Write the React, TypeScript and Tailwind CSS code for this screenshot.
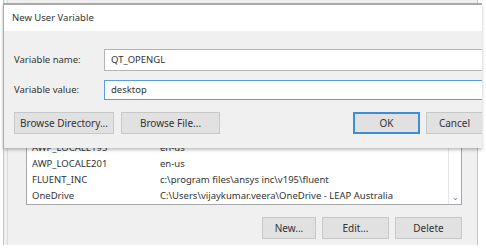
const font = { fontFamily: '"Noto Sans", "Open Sans", sans-serif' }

const rows = [
  { name: 'AWP_LOCALE195', value: 'en-us' },
  { name: 'AWP_LOCALE201', value: 'en-us' },
  { name: 'FLUENT_INC', value: 'c:\\program files\\ansys inc\\v195\\fluent' },
  { name: 'OneDrive', value: 'C:\\Users\\vijaykumar.veera\\OneDrive - LEAP Australia' },
]

function Btn({ label, primary, className }: { label: string; primary?: boolean; className?: string }) {
  return (
    <div
      className={`flex h-[22px] items-center justify-center bg-[#e1e1e1] text-[10px] text-[#333] ${
        primary ? 'border-2 border-[#3c8fd6]' : 'border border-[#c8c8c8]'
      } ${className ?? ''}`}
    >
      {label}
    </div>
  )
}

export default function App() {
  return (
    <div className="relative h-[248px] w-[486px] overflow-hidden bg-white text-[#333]" style={font}>
      {/* background window: Environment Variables */}
      <div className="ml-[3px] h-[245px] w-[475px] border-l border-r border-[#c4c4c4] bg-[#f0f0f0] pl-[3px]">
        <div className="h-full border-l border-[#dcdcdc] pl-[18px] pt-[139px]">
          <div className="flex w-[436px] border border-[#a8a8a8] bg-white">
            <div className="flex-1 pl-[5px] text-[9.5px]">
              {rows.map((r) => (
                <div key={r.name} className="flex h-[16px] items-center">
                  <span className="w-[128px]">{r.name}</span>
                  <span>{r.value}</span>
                </div>
              ))}
            </div>
            <div className="flex w-[13px] flex-col justify-end border-l border-[#e6e6e6] pb-[2px] text-center text-[8px] leading-[10px] text-[#777]">
              ⌄
            </div>
          </div>
          <div className="mt-[12px] flex w-[436px] justify-end gap-[6px]">
            <Btn label="New..." className="w-[54px]" />
            <Btn label="Edit..." className="w-[67px]" />
            <Btn label="Delete" className="w-[67px]" />
          </div>
        </div>
      </div>

      {/* New User Variable dialog */}
      <div className="absolute left-[3px] top-[3px] w-[479px] border-l border-t-2 border-[#a9a9a9] shadow-[0_2px_3px_rgba(0,0,0,0.25)]">
        <div className="flex h-[26px] items-center bg-white pl-[8px] text-[9.5px]">New User Variable</div>
        <div className="h-[117px] bg-[#f0f0f0] pl-[10px] pt-[18px]">
          <div className="flex h-[22px] items-center">
            <span className="w-[90px] text-[9.5px]">Variable name:</span>
            <div className="flex h-[22px] flex-1 items-center border-y border-l border-[#b4b4b4] bg-white pl-[6px] text-[9.5px]">
              QT_OPENGL
            </div>
          </div>
          <div className="mt-[9px] flex h-[20px] items-center">
            <span className="w-[90px] text-[9.5px]">Variable value:</span>
            <div className="flex h-[20px] flex-1 items-center border-y border-l border-[#5a9ee0] bg-white pl-[6px] text-[9.5px]">
              desktop
            </div>
          </div>
          <div className="mt-[12px] flex items-center">
            <Btn label="Browse Directory..." className="w-[100px]" />
            <Btn label="Browse File..." className="ml-[7px] w-[99px]" />
            <div className="flex-1" />
            <Btn label="OK" primary className="w-[67px]" />
            <Btn label="Cancel" className="ml-[6px] w-[56px] border-r-0" />
          </div>
        </div>
      </div>
    </div>
  )
}
